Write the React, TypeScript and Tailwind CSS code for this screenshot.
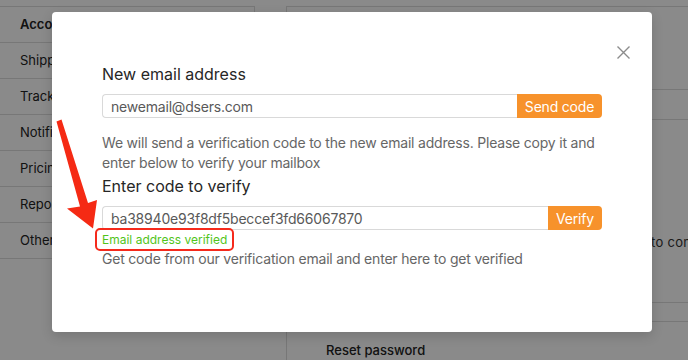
import React from 'react';

const MENU = ['Account', 'Shipping', 'Tracking', 'Notification', 'Pricing', 'Report', 'Other'];

const App = () => {
  return (
    <div className="relative w-[688px] h-[360px] overflow-hidden bg-white" style={{ fontFamily: 'Inter, "Noto Sans", sans-serif' }}>
      {/* page behind the modal */}
      <div className="flex pt-[6px] h-full">
        <div className="w-[255px] h-[253px] shrink-0 border-t border-r border-b border-[#dcdcdc]">
          {MENU.map((m, i) => (
            <div key={m} className={`h-[36px] flex items-center pl-[20px] text-[13px] text-[#222] ${i < MENU.length - 1 ? 'border-b border-[#dcdcdc]' : ''} ${i === 0 ? 'font-semibold' : ''}`}>
              {m}
            </div>
          ))}
        </div>
        <div className="ml-[31px] flex-1 border-t border-l border-[#dcdcdc] flex flex-col">
          <div className="h-[86px] border-b border-[#dcdcdc]" />
          <div className="h-[31px] border-b border-[#dcdcdc]" />
          <div className="h-[117px]" />
          <div className="h-[20px] flex items-center pl-[364px] text-[13px] tracking-[0.3px] text-[#333] whitespace-nowrap">
            to connect
          </div>
          <div className="h-[52px] border-b border-[#dcdcdc]" />
          <div className="h-[20px] border-b border-[#dcdcdc]" />
          <div className="h-[39px] flex items-end pl-[39px] text-[13px] font-medium text-[#222]">Reset password</div>
        </div>
      </div>

      {/* overlay */}
      <div className="absolute inset-0 bg-black/[0.46]" />

      {/* modal */}
      <div className="absolute left-[52px] top-[12px] w-[600px] h-[320px] bg-white rounded-[4px] shadow-[0_4px_12px_rgba(0,0,0,0.15)] pt-[50px] px-[50px] tracking-[-0.2px]">
        <button className="absolute right-[22px] top-[34px] w-[13px] h-[13px]">
          <svg width="13" height="13" viewBox="0 0 13 13" fill="none" stroke="#8c8c8c" strokeWidth="1.4">
            <path d="M0.5 0.5 L12.5 12.5 M12.5 0.5 L0.5 12.5" />
          </svg>
        </button>

        <h3 className="text-[16px] leading-[24px] text-[#262626] tracking-normal">New email address</h3>
        <div className="mt-[8px] flex h-[24px]">
          <div className="flex-1 border border-[#d9d9d9] border-r-0 rounded-l-[4px] px-[8px] flex items-center text-[14px] text-[#595959]">
            newemail@dsers.com
          </div>
          <button className="w-[85px] bg-[#f7922b] text-white text-[14px] rounded-r-[4px]">Send code</button>
        </div>

        <p className="mt-[15px] text-[14px] leading-[20px] text-[#666]">
          We will send a verification code to the new email address. Please copy it and enter below to verify your mailbox
        </p>

        <h3 className="mt-[1px] text-[16px] leading-[24px] text-[#262626] tracking-normal">Enter code to verify</h3>
        <div className="mt-[8px] flex h-[24px]">
          <div className="flex-1 border border-[#d9d9d9] border-r-0 rounded-l-[4px] px-[8px] flex items-center text-[14px] text-[#595959]">
            ba38940e93f8df5beccef3fd66067870
          </div>
          <button className="w-[54px] bg-[#f7922b] text-white text-[14px] rounded-r-[4px]">Verify</button>
        </div>

        <div className="relative w-fit text-[12px] leading-[19px] text-[#52c41a] tracking-normal">
          Email address verified
          <span className="absolute -left-[7px] -right-[7px] -top-[2px] -bottom-[2px] border-2 border-[#f52a1c] rounded-[5px]" />
        </div>
        <p className="text-[14px] leading-[20px] text-[#666]">
          Get code from our verification email and enter here to get verified
        </p>
      </div>

      {/* annotation arrow */}
      <svg className="absolute left-0 top-0" width="688" height="360" viewBox="0 0 688 360">
        <polygon points="56.5,121.5 61.5,119.5 88,203 97,200 93,228.5 67,208.5 80,206.5" fill="#f52a14" />
      </svg>
    </div>
  );
};

export default App;
